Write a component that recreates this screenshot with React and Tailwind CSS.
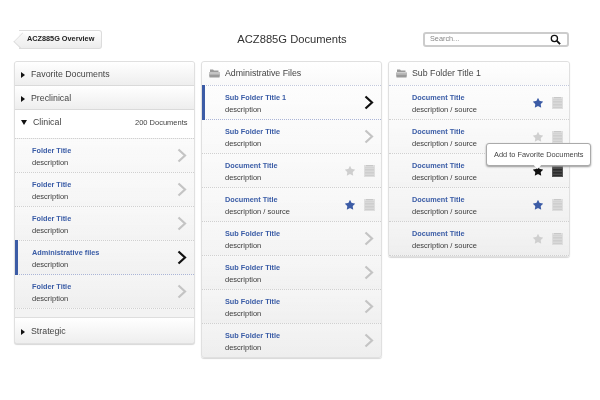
import { Star } from "lucide-react";

const sans = "font-['Liberation_Sans',Arial,sans-serif]";

function Chevron({ active }) {
  return (
    <svg width="10" height="15" viewBox="0 0 10 15" className="shrink-0 mr-px">
      <path
        d="M1.5 1.5 L8 7.500 L1.5 13.500"
        fill="none"
        stroke={active ? "#111111" : "#c4c4c4"}
        strokeWidth="2.2"
      />
    </svg>
  );
}

function DocIcon({ dark }) {
  const lines = [2.5, 4, 5.5, 7, 8.5, 10];
  return (
    <svg width="11" height="12" viewBox="0 0 11 12" className="shrink-0">
      <rect width="11" height="12" fill={dark ? "#555555" : "#dedede"} />
      <rect x="2" width="7" height="1.200" fill={dark ? "#222" : "#c8c8c8"} />
      {lines.map((y) => (
        <rect key={y} x="1" y={y} width="9" height="0.7" fill={dark ? "#1c1c1c" : "#c8c8c8"} />
      ))}
    </svg>
  );
}

function FolderIcon() {
  return (
    <svg width="11" height="9" viewBox="0 0 11 9" className="shrink-0">
      <path d="M1 0.5h3l1 1h4.500v1.500h-8.500z" fill="#9a9a9a" />
      <path d="M0 3.600h11v1h-11z" fill="#8c8c8c" />
      <path d="M0 5.200h11l-0.500 3.300h-10z" fill="#9a9a9a" />
    </svg>
  );
}

function Caret({ open }) {
  return open ? (
    <span className="w-0 h-0 border-x-[3px] border-x-transparent border-t-[5px] border-t-[#111] shrink-0" />
  ) : (
    <span className="w-0 h-0 border-y-[3px] border-y-transparent border-l-[4px] border-l-[#111] shrink-0" />
  );
}

function Section({ label, open, count, last }) {
  return (
    <div
      className={`flex items-center pl-[6px] pr-[6px] ${
        open
          ? "h-[28px] pb-[3px] bg-white"
          : "h-[24px] pt-[2px] bg-gradient-to-b from-white to-[#eeeeee] border-b border-[#dadada]"
      } ${last ? "h-[25px] rounded-b-[3px] border-b-0" : ""}`}
    >
      <Caret open={open} />
      <span className="ml-[6px] text-[8.800px] text-[#444] will-change-transform">{label}</span>
      {count && <span className="ml-auto text-[7.500px] text-[#444] will-change-transform">{count}</span>}
    </div>
  );
}

function Row({ title, desc, active, star, doc, dark, hot, indent = "pl-[17px]" }) {
  return (
    <div
      className={`relative h-[34px] last:h-[33px] last:border-b-0 flex items-center pr-[6px] ${indent} border-b border-dotted ${
        active ? "border-[#aab4d6]" : "border-[#d0d0d0]"
      } bg-gradient-to-b from-white/30 to-transparent`}
    >
      {active && <span className="absolute left-0 -top-px -bottom-px w-[3px] bg-[#3c5ca6]" />}
      <div className="pt-px flex flex-col gap-[3px] leading-[9px] will-change-transform">
        <span className="text-[7.300px] font-bold text-[#3a5ca6]">{title}</span>
        <span className="text-[7.500px] text-[#3c3c3c]">{desc}</span>
      </div>
      <div className="ml-auto flex items-center">
        {doc ? (
          <>
            <Star
              size={12}
              strokeWidth={0}
              fill={hot ? "#111" : star ? "#3c5ca6" : "#cfcfcf"}
              className="mr-[8px]"
            />
            <DocIcon dark={dark} />
          </>
        ) : (
          <Chevron active={active} />
        )}
      </div>
    </div>
  );
}

function PanelHeader({ label }) {
  return (
    <div className="h-[24px] flex items-center pl-[7px] gap-[5px] bg-gradient-to-b from-white to-[#f9f9f9] border-b border-dotted border-[#c2c8dc] rounded-t-[3px]">
      <FolderIcon />
      <span className="text-[8.800px] text-[#444] will-change-transform">{label}</span>
    </div>
  );
}

const folders = [
  "Folder Title",
  "Folder Title",
  "Folder Title",
  "Administrative files",
  "Folder Title",
];

const adminFiles = [
  { title: "Sub Folder Title 1", desc: "description", active: true },
  { title: "Sub Folder Title", desc: "description" },
  { title: "Document Title", desc: "description", doc: true },
  { title: "Document Title", desc: "description / source", doc: true, star: true },
  { title: "Sub Folder Title", desc: "description" },
  { title: "Sub Folder Title", desc: "description" },
  { title: "Sub Folder Title", desc: "description" },
  { title: "Sub Folder Title", desc: "description" },
];

const documents = [
  { star: true },
  {},
  { hot: true, dark: true },
  { star: true },
  {},
];

export default function App() {
  return (
    <div className={`${sans} w-[600px] h-[400px] bg-white pt-[30px] px-[14px] overflow-hidden`}>
      <div className="relative h-[19px] flex items-center justify-between">
        <div className="relative h-[19px] w-[83px] ml-[5px] flex items-center pl-[8px] whitespace-nowrap text-[7.300px] font-bold text-[#222] border border-[#dcdcdc] border-l-0 rounded-r-[3px] bg-gradient-to-b from-white to-[#ececec]">
          <span className="absolute -left-[4px] top-[2.500px] w-[13px] h-[13px] rotate-45 scale-x-75 origin-center border-l border-b border-[#dcdcdc] bg-gradient-to-br from-[#f8f8f8] to-[#eeeeee]" />
          <span className="relative will-change-transform">ACZ885G Overview</span>
        </div>
        <h1 className="absolute left-[187px] w-[182px] text-center text-[11.200px] leading-none font-normal text-[#333] will-change-transform">
          ACZ885G Documents
        </h1>
        <div className="mr-[17px] h-[15px] w-[146px] flex items-center pl-[5px] pr-[6px] border-2 border-[#cccccc] rounded-[3px] bg-white">
          <span className="text-[7.300px] text-[#888] will-change-transform">Search...</span>
          <svg width="11" height="11" viewBox="0 0 12 12" className="ml-auto">
            <circle cx="4.800" cy="4.800" r="3.400" fill="none" stroke="#111" strokeWidth="1.400" />
            <path d="M7.500 7.500L11 11" stroke="#111" strokeWidth="2" />
          </svg>
        </div>
      </div>

      <div className="mt-[12px] flex items-start gap-[6px]">
        <div className="w-[181px] rounded-[3px] border border-[#e0e0e0] shadow-[0_1px_1px_#d8d8d8] bg-[#f3f3f3] overflow-hidden">
          <Section label="Favorite Documents" />
          <Section label="Preclinical" />
          <Section label="Clinical" open count="200 Documents" />
          <div className="border-y border-dotted border-[#d0d0d0] bg-gradient-to-b from-[#f9f9f9] to-[#efefef]">
            {folders.map((title, i) => (
              <Row key={i} title={title} desc="description" active={i === 3} />
            ))}
          </div>
          <div className="h-[9px] bg-[#f3f3f3] border-b border-[#dedede]" />
          <Section label="Strategic" last />
        </div>

        <div className="w-[181px] rounded-[3px] border border-[#e0e0e0] shadow-[0_1px_1px_#d8d8d8] bg-gradient-to-b from-[#fdfdfd] to-[#eeeeee] overflow-hidden">
          <PanelHeader label="Administrative Files" />
          {adminFiles.map((row, i) => (
            <Row key={i} {...row} indent="pl-[23px]" />
          ))}
        </div>

        <div className="relative w-[182px] rounded-[3px] border border-[#e0e0e0] shadow-[0_1px_1px_#d8d8d8] bg-gradient-to-b from-[#fdfdfd] to-[#eeeeee]">
          <PanelHeader label="Sub Folder Title 1" />
          {documents.map((row, i) => (
            <Row
              key={i}
              title="Document Title"
              desc="description / source"
              doc
              indent="pl-[23px]"
              {...row}
            />
          ))}
          <div className="absolute left-[97px] top-[81px] w-[105px] h-[23px] flex items-center justify-center text-[7.400px] text-[#444] bg-white border border-[#aaaaaa] rounded-[3px] shadow-[0_1px_2px_#999999]">
            <span className="will-change-transform">Add to Favorite Documents</span>
            <span className="absolute left-[48px] -bottom-[3px] w-[5px] h-[5px] rotate-45 bg-white" />
          </div>
        </div>
      </div>
    </div>
  );
}
